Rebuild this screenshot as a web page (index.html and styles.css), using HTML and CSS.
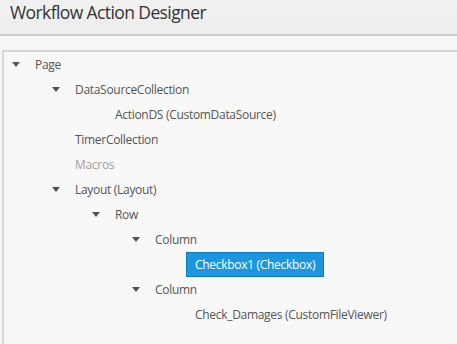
FILE: index.html
```html
<!DOCTYPE html>
<html lang="en">
<head>
    <meta charset="UTF-8">
    <title>Workflow Action Designer</title>
    <link rel="stylesheet" href="styles.css">
</head>
<body>
    <div class="header">
        <h1>Workflow Action Designer</h1>
    </div>

    <div class="content">
        <div class="tree-panel">
            <ul class="tree">
                <li>
                    <div class="node"><span class="toggle"></span><span class="label">Page</span></div>
                    <ul>
                        <li>
                            <div class="node"><span class="toggle"></span><span class="label">DataSourceCollection</span></div>
                            <ul>
                                <li><div class="node"><span class="toggle none"></span><span class="label">ActionDS (CustomDataSource)</span></div></li>
                            </ul>
                        </li>
                        <li><div class="node"><span class="toggle none"></span><span class="label">TimerCollection</span></div></li>
                        <li><div class="node"><span class="toggle none"></span><span class="label muted">Macros</span></div></li>
                        <li>
                            <div class="node"><span class="toggle"></span><span class="label">Layout (Layout)</span></div>
                            <ul>
                                <li>
                                    <div class="node"><span class="toggle"></span><span class="label">Row</span></div>
                                    <ul>
                                        <li>
                                            <div class="node"><span class="toggle"></span><span class="label">Column</span></div>
                                            <ul>
                                                <li><div class="node"><span class="toggle none"></span><span class="label selected">Checkbox1 (Checkbox)</span></div></li>
                                            </ul>
                                        </li>
                                        <li>
                                            <div class="node"><span class="toggle"></span><span class="label">Column</span></div>
                                            <ul>
                                                <li><div class="node"><span class="toggle none"></span><span class="label">Check_Damages (CustomFileViewer)</span></div></li>
                                            </ul>
                                        </li>
                                    </ul>
                                </li>
                            </ul>
                        </li>
                    </ul>
                </li>
            </ul>
        </div>
    </div>
</body>
</html>
```

FILE: styles.css
```css
* {
    box-sizing: border-box;
    margin: 0;
    padding: 0;
}

body {
    font-family: 'Open Sans', 'Noto Sans', sans-serif;
    background: #f7f7f7;
    color: #555;
    overflow: hidden;
}

.header {
    height: 36px;
    background: linear-gradient(#f1f1f1, #ededed);
    border-bottom: 2px solid #cdcdcd;
    padding: 2px 10px 0;
}

h1 {
    font-size: 17.5px;
    line-height: 20px;
    font-weight: 400;
    color: #333;
    letter-spacing: -0.6px;
}

.content {
    padding: 14px 0 0 2px;
}

.tree-panel {
    border-top: 2px solid #d6d6d6;
    border-left: 2px solid #d6d6d6;
    background: #f8f8f8;
    height: 300px;
}

.tree,
.tree ul {
    list-style: none;
}

.tree ul {
    padding-left: 40px;
}

.node {
    height: 25px;
    display: flex;
    align-items: center;
    padding-left: 8px;
}

.toggle {
    width: 0;
    height: 5px;
    margin-right: 14px;
    border-left: 4px solid transparent;
    border-right: 4px solid transparent;
    border-top: 5px solid #555;
}

.toggle.none {
    border-color: transparent;
}

.label {
    font-size: 12px;
    letter-spacing: -0.3px;
    line-height: 23px;
    padding: 0 8px;
    margin-left: -8px;
    border: 1px solid transparent;
    white-space: nowrap;
}

.label.muted {
    color: #a0a0a0;
}

.label.selected {
    background: #1c96df;
    border-color: #0d7cc2;
    color: #fff;
}
```
